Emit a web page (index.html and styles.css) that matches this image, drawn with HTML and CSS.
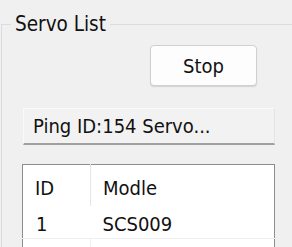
FILE: index.html
```html
<!DOCTYPE html>
<html lang="en">
<head>
    <meta charset="UTF-8">
    <meta name="viewport" content="width=device-width, initial-scale=1.0">
    <title>Servo List</title>
    <link rel="stylesheet" href="styles.css">
</head>
<body>
    <fieldset class="group">
        <legend>Servo List</legend>

        <div class="actions">
            <button type="button" class="btn">Stop</button>
        </div>

        <div class="status">Ping ID:154 Servo...</div>

        <table class="servo-list">
            <thead>
                <tr>
                    <th class="col-id">ID</th>
                    <th>Modle</th>
                </tr>
            </thead>
            <tbody>
                <tr>
                    <td class="col-id">1</td>
                    <td>SCS009</td>
                </tr>
                <tr class="empty">
                    <td class="col-id"></td>
                    <td></td>
                </tr>
            </tbody>
        </table>
    </fieldset>
</body>
</html>
```

FILE: styles.css
```css
html, body {
    margin: 0;
    padding: 0;
    height: 100%;
    overflow: hidden;
}

body {
    font-family: "DejaVu Sans Condensed", "DejaVu Sans", sans-serif;
    font-size: 20px;
    color: #111;
    background-color: #f0f0f0;
}

.group {
    margin: 12px 0 0 1px;
    padding: 0 18px 0 21px;
    border: 1px solid #dcdcdc;
    border-right: none;
    border-bottom: none;
    min-height: 300px;
}

.group legend {
    margin-left: -12px;
    padding: 0 4px;
    line-height: 24px;
    font-size: 20.5px;
}

.actions {
    display: flex;
    justify-content: flex-end;
    margin-top: 9px;
}

.btn {
    width: 107px;
    height: 41px;
    margin-right: 18px;
    font-family: inherit;
    font-size: 20px;
    color: #111;
    background-color: #fdfdfd;
    border: 1px solid #d0d0d0;
    border-radius: 4px;
    box-shadow: 0 1px 1px rgba(0, 0, 0, 0.12);
}

.status {
    margin-top: 22px;
    height: 34px;
    padding-left: 9px;
    display: flex;
    align-items: center;
    background-color: #f2f2f2;
    border-top: 1px solid #fafafa;
    border-left: 1px solid #fafafa;
    border-right: 1px solid #e4e4e4;
    border-bottom: 2px solid #a0a0a0;
}

.servo-list {
    margin: 19px 0 0 -1px;
    width: 253px;
    table-layout: fixed;
    border-collapse: collapse;
    background-color: #fff;
    border: 1px solid #8a8d93;
}

.servo-list th,
.servo-list td {
    text-align: left;
    font-weight: normal;
    line-height: 24px;
    padding: 0 0 0 12px;
    vertical-align: top;
    box-sizing: border-box;
}

.servo-list .col-id {
    width: 68px;
}

.servo-list th {
    height: 41px;
    padding-top: 11px;
}

.servo-list th.col-id {
    border-right: 1px solid #e5e5e5;
}

.servo-list td {
    height: 33px;
    padding-top: 6px;
    border-bottom: 1px solid #efefef;
}

.servo-list td.col-id {
    padding-left: 13px;
}

.servo-list .empty td {
    height: 40px;
    border-bottom: none;
}

.servo-list .empty td.col-id {
    border-right: 1px solid #efefef;
}
```
